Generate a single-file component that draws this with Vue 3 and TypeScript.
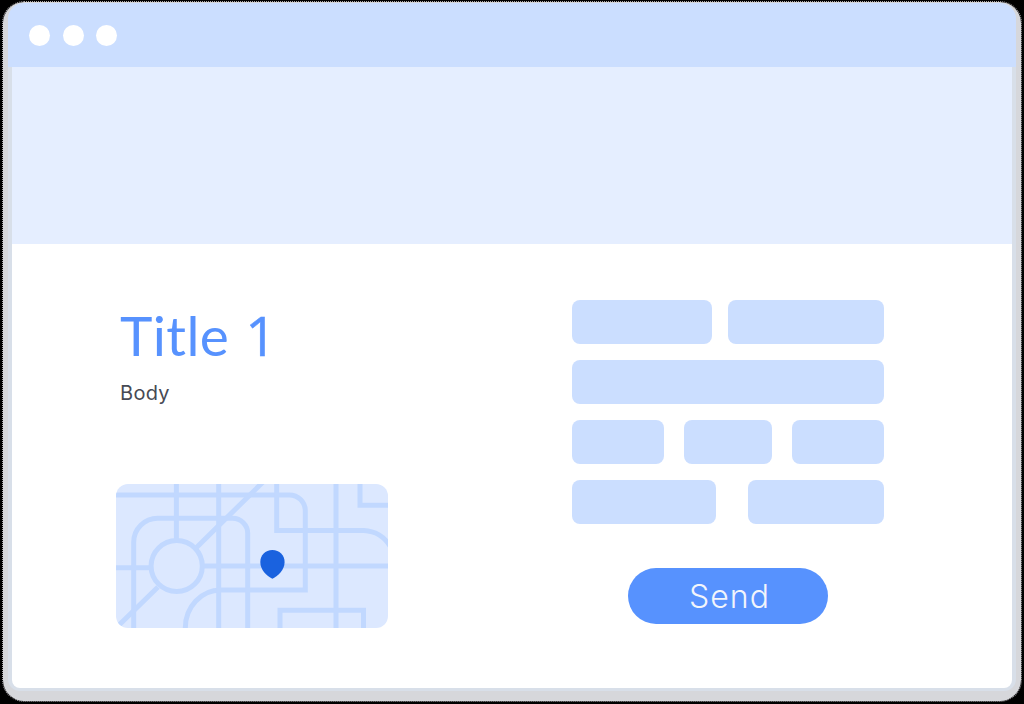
<script setup lang="ts">
const rows: number[][] = [[140, 156], [312], [92, 88, 92], [144, 136]]
</script>

<template>
  <main class="shell">
    <div class="window">
      <header class="bar"><i v-for="n in 3" :key="n" class="dot"></i></header>
      <div class="page">
        <div class="hero"></div>
        <div class="content">
          <section class="intro">
            <h1><span>Title</span><span class="num">1</span></h1>
            <p>Body</p>
            <svg class="map" width="272" height="144" viewBox="0 0 272 144">
              <rect width="272" height="144" fill="#dce8ff" />
              <g fill="none" stroke="#c1d8ff" stroke-width="5">
                <path d="M0 10.9H173.3A16 16 0 0 1 189.3 26.9V106H105A35.5 38 0 0 0 69.3 144" />
                <path d="M60.4 0V56M102.7 0V144M220 0V144" />
                <path d="M17.7 144V58.3A24 24 0 0 1 41.7 34.3H116.7A15 15 0 0 1 131.7 49.3V144" />
                <circle cx="60.7" cy="82" r="25.6" />
                <path d="M0 83.7H34M87 82H272M80 64L147 -2M42 103L0 144" />
                <path d="M160.7 0V46.5H248A32 32 0 0 1 274 62" />
                <path d="M244 0V21.3H272M164 144V126.3H247.5V144" />
              </g>
              <path fill="#1a62df" d="M156.4 66C149.3 66 144.3 71.2 144.3 78C144.3 86 150.5 92 156.4 94.8C162.3 92 168.6 86 168.6 78C168.6 71.2 163.5 66 156.4 66Z" />
            </svg>
          </section>
          <section class="form">
            <div v-for="(row, i) in rows" :key="i" class="row">
              <div v-for="(w, j) in row" :key="j" class="field" :style="{ width: w + 'px' }"></div>
            </div>
            <button type="button"><span>Send</span></button>
          </section>
        </div>
      </div>
    </div>
  </main>
</template>

<style>
body { background: #000; overflow: hidden; }
</style>

<style scoped>
* { box-sizing: border-box; }
.shell {
  width: 1020px; height: 701px; margin: 1px 2px 0; padding: 1px 5px 10px;
  border: 1px dotted #aaa6aa;
  border-radius: 22px; background: #d6d7db; background-clip: padding-box;
  display: flex;
}
.window {
  width: 1008px; height: 688px; border-radius: 16px 16px 12px 12px;
  background: #d8dfe9; overflow: hidden;
}
.bar { height: 64px; background: #cbdeff; padding: 22px 0 0 21px; display: flex; gap: 12.6px; }
.dot { width: 21px; height: 21px; border-radius: 50%; background: #fff; }
.page {
  width: 1000px; height: 621px; margin: 0 4px; background: #fff;
  border-radius: 0 0 8px 8px; overflow: hidden;
}
.hero { height: 177px; background: #e5eeff; }
.content { display: flex; justify-content: space-between; padding: 56px 128px 0 104px; }
.intro { width: 272px; }
h1 {
  margin: 0 0 0 4px; height: 71px; display: flex;
  font: 400 55px/71px Lato, "Liberation Sans", sans-serif; color: #5792fe; letter-spacing: .4px;
}
.num { font-family: "Open Sans", sans-serif; margin: -1px 0 0 16px; -webkit-text-stroke: .5px #5792fe; }
p {
  margin: 7px 0 0 4px; height: 30px;
  font: 400 20px/30px Inter, "Liberation Sans", sans-serif; color: #474a54; letter-spacing: .3px;
}
.map { display: block; margin-top: 76px; border-radius: 12px; }
.form { width: 312px; display: flex; flex-direction: column; gap: 16px; }
.row { display: flex; justify-content: space-between; }
.field { height: 44px; border-radius: 8px; background: #cbdeff; }
button {
  width: 200px; height: 56px; margin: 28px auto 0; padding: 1px 0 0 3px; border: 0;
  border-radius: 28px; background: #5792fe; color: #f2f5fb;
  font: 300 32px Inter, "Liberation Sans", sans-serif; letter-spacing: 1px;
}
</style>
